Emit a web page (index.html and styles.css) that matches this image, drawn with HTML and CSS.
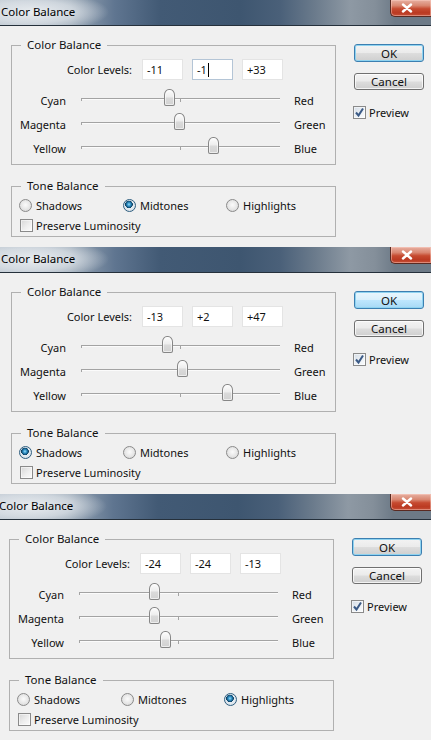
FILE: index.html
```html
<!DOCTYPE html>
<html>
<head>
<meta charset="utf-8">
<title>Color Balance</title>
<link rel="stylesheet" href="styles.css">
</head>
<body>

<div class="dialog">
  <div class="titlebar"><span class="title">Color Balance</span><span class="close"><svg width="12" height="10" viewBox="0 0 12 10"><path d="M2 1.5 L10 8.5 M10 1.5 L2 8.5" stroke="#fff" stroke-width="2.4" stroke-linecap="round"/></svg></span></div>
  <div class="body">
    <div class="left">
      <fieldset class="group group-cb">
        <legend>Color Balance</legend>
        <div class="levels"><span class="lv-label">Color Levels:</span><span class="field">-11</span><span class="field focus">-1<span class="caret"></span></span><span class="field">+33</span></div>
        <div class="srow"><span class="sl-l">Cyan</span><span class="track"><span class="tick tick-start"></span><span class="tick tick-mid"></span><span class="thumb" style="left:83px"></span></span><span class="sl-r">Red</span></div>
        <div class="srow"><span class="sl-l">Magenta</span><span class="track"><span class="tick tick-start"></span><span class="thumb" style="left:93px"></span></span><span class="sl-r">Green</span></div>
        <div class="srow"><span class="sl-l">Yellow</span><span class="track"><span class="tick tick-start"></span><span class="tick tick-mid"></span><span class="thumb" style="left:127px"></span></span><span class="sl-r">Blue</span></div>
      </fieldset>
      <fieldset class="group group-tone">
        <legend>Tone Balance</legend>
        <div class="radios">
          <span class="opt"><span class="radio"></span>Shadows</span>
          <span class="opt"><span class="radio on"></span>Midtones</span>
          <span class="opt"><span class="radio"></span>Highlights</span>
        </div>
        <div class="check lum"><span class="box"></span>Preserve Luminosity</div>
      </fieldset>
    </div>
    <div class="right">
      <button class="btn ok">OK</button>
      <button class="btn cancel">Cancel</button>
      <div class="check preview"><span class="box on"><svg width="11" height="11" viewBox="0 0 11 11"><path d="M2 5.5 L4.5 8.5 L9 1.5" fill="none" stroke="#3b5a86" stroke-width="2"/></svg></span>Preview</div>
    </div>
  </div>
</div>

<div class="dialog">
  <div class="titlebar"><span class="title">Color Balance</span><span class="close"><svg width="12" height="10" viewBox="0 0 12 10"><path d="M2 1.5 L10 8.5 M10 1.5 L2 8.5" stroke="#fff" stroke-width="2.4" stroke-linecap="round"/></svg></span></div>
  <div class="body">
    <div class="left">
      <fieldset class="group group-cb">
        <legend>Color Balance</legend>
        <div class="levels"><span class="lv-label">Color Levels:</span><span class="field">-13</span><span class="field">+2</span><span class="field">+47</span></div>
        <div class="srow"><span class="sl-l">Cyan</span><span class="track"><span class="tick tick-start"></span><span class="tick tick-mid"></span><span class="thumb" style="left:81px"></span></span><span class="sl-r">Red</span></div>
        <div class="srow"><span class="sl-l">Magenta</span><span class="track"><span class="tick tick-start"></span><span class="thumb" style="left:96px"></span></span><span class="sl-r">Green</span></div>
        <div class="srow"><span class="sl-l">Yellow</span><span class="track"><span class="tick tick-start"></span><span class="tick tick-mid"></span><span class="thumb" style="left:141px"></span></span><span class="sl-r">Blue</span></div>
      </fieldset>
      <fieldset class="group group-tone">
        <legend>Tone Balance</legend>
        <div class="radios">
          <span class="opt"><span class="radio on"></span>Shadows</span>
          <span class="opt"><span class="radio"></span>Midtones</span>
          <span class="opt"><span class="radio"></span>Highlights</span>
        </div>
        <div class="check lum"><span class="box"></span>Preserve Luminosity</div>
      </fieldset>
    </div>
    <div class="right">
      <button class="btn ok hover">OK</button>
      <button class="btn cancel">Cancel</button>
      <div class="check preview"><span class="box on"><svg width="11" height="11" viewBox="0 0 11 11"><path d="M2 5.5 L4.5 8.5 L9 1.5" fill="none" stroke="#3b5a86" stroke-width="2"/></svg></span>Preview</div>
    </div>
  </div>
</div>

<div class="dialog shift">
  <div class="titlebar"><span class="title">Color Balance</span><span class="close"><svg width="12" height="10" viewBox="0 0 12 10"><path d="M2 1.5 L10 8.5 M10 1.5 L2 8.5" stroke="#fff" stroke-width="2.4" stroke-linecap="round"/></svg></span></div>
  <div class="body">
    <div class="left">
      <fieldset class="group group-cb">
        <legend>Color Balance</legend>
        <div class="levels"><span class="lv-label">Color Levels:</span><span class="field">-24</span><span class="field">-24</span><span class="field">-13</span></div>
        <div class="srow"><span class="sl-l">Cyan</span><span class="track"><span class="tick tick-start"></span><span class="tick tick-mid"></span><span class="thumb" style="left:70px"></span></span><span class="sl-r">Red</span></div>
        <div class="srow"><span class="sl-l">Magenta</span><span class="track"><span class="tick tick-start"></span><span class="tick tick-mid"></span><span class="thumb" style="left:70px"></span></span><span class="sl-r">Green</span></div>
        <div class="srow"><span class="sl-l">Yellow</span><span class="track"><span class="tick tick-start"></span><span class="tick tick-mid"></span><span class="thumb" style="left:81px"></span></span><span class="sl-r">Blue</span></div>
      </fieldset>
      <fieldset class="group group-tone">
        <legend>Tone Balance</legend>
        <div class="radios">
          <span class="opt"><span class="radio"></span>Shadows</span>
          <span class="opt"><span class="radio"></span>Midtones</span>
          <span class="opt"><span class="radio on"></span>Highlights</span>
        </div>
        <div class="check lum"><span class="box"></span>Preserve Luminosity</div>
      </fieldset>
    </div>
    <div class="right">
      <button class="btn ok">OK</button>
      <button class="btn cancel">Cancel</button>
      <div class="check preview"><span class="box on"><svg width="11" height="11" viewBox="0 0 11 11"><path d="M2 5.5 L4.5 8.5 L9 1.5" fill="none" stroke="#3b5a86" stroke-width="2"/></svg></span>Preview</div>
    </div>
  </div>
</div>

</body>
</html>
```

FILE: styles.css
```css
* { box-sizing: border-box; }
html, body { margin: 0; padding: 0; }
body {
  width: 431px;
  height: 740px;
  overflow: hidden;
  background: #f0f0f0;
  font-family: "Noto Sans", "Open Sans", sans-serif;
  font-size: 11px;
  color: #111;
}

.dialog {
  width: 431px;
  height: 247px;
  background: #f0f0f0;
  overflow: hidden;
}
.dialog.shift {
  margin-left: -2px;
  width: 433px;
  height: 248px;
}

.titlebar {
  height: 26px;
  display: flex;
  justify-content: space-between;
  align-items: flex-start;
  border-bottom: 1px solid #25303b;
  background:
    radial-gradient(ellipse 75px 20px at 34px 12px, rgba(236,239,242,0.95) 0%, rgba(225,230,235,0.7) 55%, rgba(210,218,226,0) 100%),
    linear-gradient(to right, #b9c3cd 0px, #9aa8b6 70px, #5f7590 115px, #425a75 160px, #3e5670 240px, #4a6079 280px, #6b7b8c 315px, #8e99a4 350px, #848f9a 375px, #6d7a87 395px);
}
.title {
  line-height: 24px;
  padding-left: 1px;
  font-size: 11.5px;
  color: #000;
}
.close {
  width: 41px;
  height: 17px;
  display: flex;
  align-items: center;
  justify-content: center;
  padding-right: 8px;
  border: 1px solid #5a2a22;
  border-top: none;
  border-right: none;
  border-radius: 0 0 0 5px;
  background: linear-gradient(#e7b0a2 0%, #d98670 35%, #c64a30 55%, #bb3a22 80%, #c65038 100%);
  box-shadow: inset 0 0 0 1px rgba(255,210,200,0.45);
}

.body {
  display: flex;
  padding-left: 11px;
}
.left { width: 325px; }
.right {
  margin-left: 18px;
  width: 70px;
  padding-top: 18px;
  display: flex;
  flex-direction: column;
}

.group {
  margin: 0;
  padding: 0;
  width: 325px;
  min-width: 0;
  border: 1px solid #b0b0b0;
}
.group legend {
  margin-left: 9px;
  padding: 0 6px;
  line-height: 14px;
  font-size: 11.5px;
}
.group-cb {
  margin-top: 12px;
  padding: 7px 0 4px;
}
.group-tone {
  margin-top: 14px;
  padding: 4px 0 3px;
}

.levels {
  display: flex;
  align-items: center;
  gap: 9px;
  height: 21px;
}
.lv-label {
  width: 120px;
  text-align: right;
  margin-right: 1px;
}
.field {
  width: 41px;
  height: 21px;
  background: #fff;
  border: 1px solid #e4e4e4;
  padding-left: 4px;
  line-height: 19px;
  display: flex;
  align-items: center;
}
.field.focus { border-color: #b4c5d6; }
.caret {
  width: 1px;
  height: 14px;
  background: #000;
  margin-left: 1px;
}

.srow {
  display: flex;
  align-items: center;
  height: 24px;
}
.levels + .srow { margin-top: 8px; }
.sl-l {
  width: 54px;
  text-align: right;
}
.track {
  position: relative;
  align-self: stretch;
  width: 199px;
  margin-left: 15px;
  margin-right: 14px;
}
.track::before {
  content: "";
  position: absolute;
  left: 0;
  right: 0;
  top: 10px;
  height: 1px;
  background: #a3a3a3;
  box-shadow: 0 1px 0 #fbfbfb;
}
.tick {
  position: absolute;
  top: 10px;
  width: 1px;
  height: 4px;
  background: #a3a3a3;
}
.tick-start { left: 0; height: 3px; }
.tick-mid { left: 99px; }
.thumb {
  position: absolute;
  top: 1px;
  width: 11px;
  height: 17px;
  border: 1px solid #868686;
  border-radius: 5px 5px 2px 2px / 6px 6px 2px 2px;
  background: linear-gradient(#fdfdfd 0%, #eeeeee 45%, #dadada 55%, #d2d2d2 100%);
  box-shadow: inset 0 0 0 1px rgba(255,255,255,0.6);
}

.radios {
  display: grid;
  grid-template-columns: 104px 103px auto;
  padding-left: 7px;
  height: 16px;
  align-items: center;
}
.opt {
  display: flex;
  align-items: center;
  gap: 4px;
}
.radio {
  width: 13px;
  height: 13px;
  border-radius: 50%;
  border: 1px solid #8a8a8a;
  background: radial-gradient(circle at 50% 45%, #fbfbfb 0%, #e6e6e6 55%, #cfcfcf 100%);
  flex: none;
}
.radio.on {
  border-color: #2f5f80;
  background:
    radial-gradient(circle at 45% 40%, #9be0f8 0px, #3b9bd0 1.5px, #145b86 3px, #0d3d5e 3.6px, rgba(0,0,0,0) 4px),
    radial-gradient(circle at 50% 45%, #f4f8fb 0%, #dfe7ee 60%, #c9d3dc 100%);
}

.check {
  display: flex;
  align-items: center;
  gap: 3px;
  height: 16px;
}
.lum {
  margin-top: 4px;
  padding-left: 8px;
}
.box {
  width: 13px;
  height: 13px;
  border: 1px solid #8a8a8a;
  background: linear-gradient(135deg, #d6d6d6 0%, #eeeeee 55%, #fbfbfb 100%);
  box-shadow: inset 0 0 0 1px rgba(255,255,255,0.5);
  flex: none;
  display: flex;
  align-items: center;
  justify-content: center;
}
.box.on {
  background: linear-gradient(135deg, #d5dde6 0%, #eef2f6 60%, #fbfcfd 100%);
}

.btn {
  width: 70px;
  padding: 0;
  font-family: inherit;
  font-size: 11.5px;
  color: #111;
  border: 1px solid #707070;
  border-radius: 3px;
  background: linear-gradient(#f3f3f3 0%, #ebebeb 48%, #dddddd 52%, #cfcfcf 100%);
  box-shadow: inset 0 0 0 1px rgba(255,255,255,0.75);
  line-height: 15px;
}
.btn.ok {
  height: 18px;
  border-color: #3c7fb1;
  box-shadow: inset 0 0 0 1px #8fd3f0;
}
.btn.ok.hover {
  background: linear-gradient(#eaf6fd 0%, #d9f0fc 48%, #bee6fd 52%, #a7d9f5 100%);
}
.btn.cancel {
  height: 17px;
  margin-top: 11px;
}
.preview {
  margin-top: 14px;
  margin-left: -1px;
}
```
